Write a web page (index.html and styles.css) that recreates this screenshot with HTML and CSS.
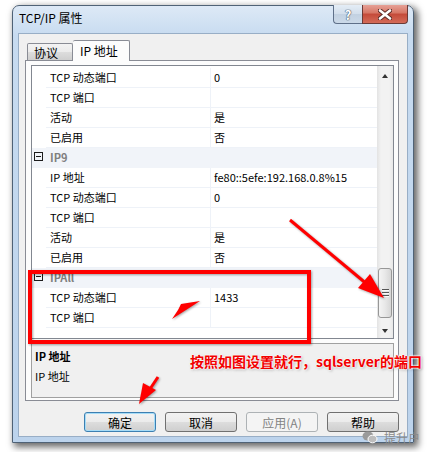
FILE: index.html
```html
<!DOCTYPE html>
<html lang="zh-CN">
<head>
    <meta charset="UTF-8">
    <title>TCP/IP 属性</title>
    <link rel="stylesheet" href="styles.css">
</head>
<body>
    <!-- Dialog window -->
    <div class="window">
        <div class="titlebar">
            <span class="title">TCP/IP 属性</span>
            <div class="caption-btns">
                <div class="cap-btn help">?</div>
                <div class="cap-btn close">
                    <svg width="14" height="11" viewBox="0 0 14 11">
                        <path d="M2 1.5 L12 9.5 M12 1.5 L2 9.5" stroke="#5a2a26" stroke-width="4.5" stroke-linecap="round"/>
                        <path d="M2 1.5 L12 9.5 M12 1.5 L2 9.5" stroke="#fff" stroke-width="2.6" stroke-linecap="round"/>
                    </svg>
                </div>
            </div>
        </div>

        <div class="client">
            <div class="tabs">
                <div class="tab">协议</div>
                <div class="tab active">IP 地址</div>
            </div>

            <div class="panel">
                <div class="grid">
                    <div class="rows">
                        <div class="row"><span class="margin"></span><span class="label">TCP 动态端口</span><span class="value">0</span></div>
                        <div class="row"><span class="margin"></span><span class="label">TCP 端口</span><span class="value"></span></div>
                        <div class="row"><span class="margin"></span><span class="label">活动</span><span class="value">是</span></div>
                        <div class="row"><span class="margin"></span><span class="label">已启用</span><span class="value">否</span></div>
                        <div class="row cat"><span class="margin"><i class="toggle"></i></span><span class="label">IP9</span><span class="value"></span></div>
                        <div class="row"><span class="margin"></span><span class="label">IP 地址</span><span class="value">fe80::5efe:192.168.0.8%15</span></div>
                        <div class="row"><span class="margin"></span><span class="label">TCP 动态端口</span><span class="value">0</span></div>
                        <div class="row"><span class="margin"></span><span class="label">TCP 端口</span><span class="value"></span></div>
                        <div class="row"><span class="margin"></span><span class="label">活动</span><span class="value">是</span></div>
                        <div class="row"><span class="margin"></span><span class="label">已启用</span><span class="value">否</span></div>
                        <div class="row cat"><span class="margin"><i class="toggle"></i></span><span class="label">IPAll</span><span class="value"></span></div>
                        <div class="row"><span class="margin"></span><span class="label">TCP 动态端口</span><span class="value">1433</span></div>
                        <div class="row"><span class="margin"></span><span class="label">TCP 端口</span><span class="value"></span></div>
                    </div>
                    <div class="scrollbar">
                        <div class="sb-arrow"><i class="tri-up"></i></div>
                        <div class="sb-track">
                            <div class="sb-thumb"><i></i><i></i><i></i></div>
                        </div>
                        <div class="sb-arrow"><i class="tri-down"></i></div>
                    </div>
                </div>
                <div class="desc">
                    <div class="desc-title">IP 地址</div>
                    <div class="desc-text">IP 地址</div>
                </div>
            </div>

            <div class="buttons">
                <button class="btn default">确定</button>
                <button class="btn">取消</button>
                <button class="btn" disabled>应用(A)</button>
                <button class="btn">帮助</button>
            </div>
        </div>
    </div>

    <!-- Red annotations drawn over the screenshot -->
    <svg class="marks" width="429" height="452" viewBox="0 0 429 452">
        <rect x="30" y="272" width="279" height="70" fill="none" stroke="#f00" stroke-width="4"/>
        <line x1="290" y1="220" x2="368" y2="285" stroke="#f00" stroke-width="3"/>
        <polygon points="384,298 358,288 370,274" fill="#f00"/>
        <polygon points="200,301 172,319 178,310 181,304" fill="#f00"/>
        <line x1="158" y1="377" x2="150" y2="389" stroke="#f00" stroke-width="3"/>
        <polygon points="139,404 143,383 156,390" fill="#f00"/>
    </svg>
    <div class="note">按照如图设置就行，sqlserver的端口</div>

    <div class="watermark">
        <svg width="16" height="13" viewBox="0 0 16 13">
            <ellipse cx="6" cy="5" rx="5.5" ry="4.5" fill="#9a9a9a"/>
            <ellipse cx="10.5" cy="8" rx="4.5" ry="3.8" fill="#bdbdbd" stroke="#fff" stroke-width="1"/>
        </svg>
        <span>提升户</span>
    </div>
</body>
</html>
```

FILE: styles.css
```css
/* Reset */
* {
    margin: 0;
    padding: 0;
    box-sizing: border-box;
}

body {
    width: 429px;
    height: 452px;
    position: relative;
    overflow: hidden;
    background-color: #fff;
    font-family: "Noto Sans CJK SC", "Noto Sans", sans-serif;
    font-size: 12px;
    color: #000;
}

/* Window frame */
.window {
    margin: 5px 0 0 12px;
    width: 402px;
    height: 438px;
    border: 1px solid #4f6276;
    border-radius: 7px 7px 0 0;
    background: linear-gradient(180deg, #dde9f6, #c7dbf0 30px, #bcd3ec);
    box-shadow: 3px 3px 7px 1px rgba(0, 0, 0, 0.6);
    padding: 0 5px 5px 5px;
    display: flex;
    flex-direction: column;
}

.titlebar {
    height: 27px;
    display: flex;
    justify-content: space-between;
    align-items: flex-start;
}

.title {
    padding-left: 1px;
    line-height: 24px;
    margin-top: 0;
    font-size: 12px;
    color: #000;
}

.caption-btns {
    display: flex;
    margin-top: -1px;
}

.cap-btn {
    height: 19px;
    display: flex;
    align-items: center;
    justify-content: center;
    border: 1px solid #5f7089;
    border-top: none;
}

.cap-btn.help {
    width: 29px;
    border-right: none;
    border-radius: 0 0 0 4px;
    background: linear-gradient(180deg, #e4edf6, #d2deeb 50%, #c2d1e1 50%, #cbd9e8);
    color: #fff;
    font-weight: bold;
    font-size: 13px;
    text-shadow: 0 0 1px #44566b, 0 0 1px #44566b, 0 0 1px #44566b;
}

.cap-btn.close {
    width: 46px;
    border-color: #6b3a36;
    border-radius: 0 0 4px 0;
    background: linear-gradient(180deg, #e6a196, #d67564 45%, #c44a39 50%, #d46b58);
}

/* Client area */
.client {
    flex: 1;
    background-color: #f0f0f0;
    border: 1px solid #98aec6;
    padding: 6px 8px 0 6px;
    display: flex;
    flex-direction: column;
}

.tabs {
    height: 20px;
    display: flex;
    align-items: flex-end;
    padding-left: 2px;
    position: relative;
    z-index: 1;
}

.tab {
    height: 17px;
    padding: 0 6px;
    width: 46px;
    border: 1px solid #898c95;
    border-bottom: none;
    border-radius: 2px 2px 0 0;
    background: linear-gradient(180deg, #f3f3f3, #ebebeb 50%, #dddddd 50%, #cfcfcf);
    line-height: 17px;
    font-size: 12px;
}

.tab.active {
    width: 57px;
    height: 21px;
    margin-bottom: -1px;
    border-left: none;
    background: #fcfcfc;
    line-height: 20px;
    padding-left: 7px;
}

.panel {
    height: 341px;
    border: 1px solid #898c95;
    background-color: #fcfcfc;
    padding: 4px 4px 2px 5px;
    display: flex;
    flex-direction: column;
    gap: 4px;
}

/* Property grid */
.grid {
    height: 274px;
    border: 1px solid #828790;
    background-color: #fff;
    display: flex;
}

.rows {
    flex: 1;
    padding-top: 2px;
    overflow: hidden;
}

.row {
    display: grid;
    grid-template-columns: 14px 165px 1fr;
    height: 20px;
    font-size: 11px;
    line-height: 19px;
}

.row .label {
    padding-left: 4px;
    border-bottom: 1px solid #eef2f8;
    border-right: 1px solid #eef2f8;
    white-space: nowrap;
}

.row .value {
    padding-left: 3px;
    border-bottom: 1px solid #eef2f8;
    white-space: nowrap;
}

.row.cat {
    background-color: #f1f4f9;
}

.row.cat .label {
    border: none;
    font-weight: bold;
    color: #7f7f7f;
}

.row.cat .value {
    border: none;
}

.row .margin {
    display: flex;
    align-items: flex-start;
}

.toggle {
    display: block;
    width: 9px;
    height: 9px;
    margin: 4px 0 0 2px;
    border: 1px solid #1c1c1c;
    background: linear-gradient(#1c1c1c, #1c1c1c) center / 5px 1px no-repeat;
}

/* Scrollbar */
.scrollbar {
    width: 16px;
    display: flex;
    flex-direction: column;
    background: linear-gradient(90deg, #e3e3e3, #f2f2f2 25%, #f2f2f2 75%, #e8e8e8);
}

.sb-arrow {
    height: 17px;
    display: flex;
    align-items: center;
    justify-content: center;
}

.tri-up,
.tri-down {
    display: block;
    width: 0;
    height: 0;
    border-left: 3.5px solid transparent;
    border-right: 3.5px solid transparent;
}

.tri-up {
    border-bottom: 4px solid #333;
    margin-top: 2px;
}

.tri-down {
    border-top: 4px solid #333;
    margin-top: 2px;
}

.sb-track {
    flex: 1;
    display: flex;
    flex-direction: column;
    justify-content: flex-end;
    padding: 0 1px 3px 1px;
}

.sb-thumb {
    height: 50px;
    border: 1px solid #979797;
    border-radius: 3px;
    background: linear-gradient(90deg, #f4f4f4, #e8e8e8 50%, #d6d6d6);
    display: flex;
    flex-direction: column;
    align-items: center;
    justify-content: center;
    gap: 1px;
}

.sb-thumb i {
    display: block;
    width: 7px;
    height: 2px;
    border-top: 1px solid #555;
    border-bottom: 1px solid #fafafa;
}

/* Description pane */
.desc {
    height: 55px;
    border: 1px solid #a0a0a0;
    background-color: #f0f0f0;
    padding: 2px 3px;
    font-size: 11px;
    line-height: 20px;
}

.desc-title {
    font-weight: bold;
}

/* Dialog buttons */
.buttons {
    display: flex;
    justify-content: flex-end;
    gap: 9px;
    margin-top: 11px;
}

.btn {
    width: 72px;
    height: 20px;
    border: 1px solid #707070;
    border-radius: 3px;
    background: linear-gradient(180deg, #f2f2f2, #ebebeb 50%, #dddddd 50%, #cfcfcf);
    font-family: "Noto Sans CJK SC", "Noto Sans", sans-serif;
    font-size: 12px;
    line-height: 17px;
    color: #000;
}

.btn.default {
    border-color: #3c7fb1;
    box-shadow: inset 0 0 0 1px #a6dcf7;
}

.btn:disabled {
    border-color: #adb2b5;
    background: #f4f4f4;
    color: #838383;
}

/* Annotations */
.marks {
    position: absolute;
    left: 0;
    top: 0;
    filter: drop-shadow(1px 1px 1px rgba(0, 0, 0, 0.35));
}

.note {
    position: absolute;
    left: 190px;
    top: 351px;
    font-size: 14px;
    font-weight: bold;
    line-height: 20px;
    color: #f20000;
    white-space: nowrap;
    text-shadow: 0 0 2px #fff, 0 0 2px #fff, 0 0 2px #fff, 1px 1px 3px rgba(0, 0, 0, 0.35);
}

.watermark {
    position: absolute;
    left: 362px;
    top: 429px;
    display: flex;
    align-items: center;
    gap: 6px;
    font-size: 12px;
    color: #8a8a8a;
    white-space: nowrap;
}
```
